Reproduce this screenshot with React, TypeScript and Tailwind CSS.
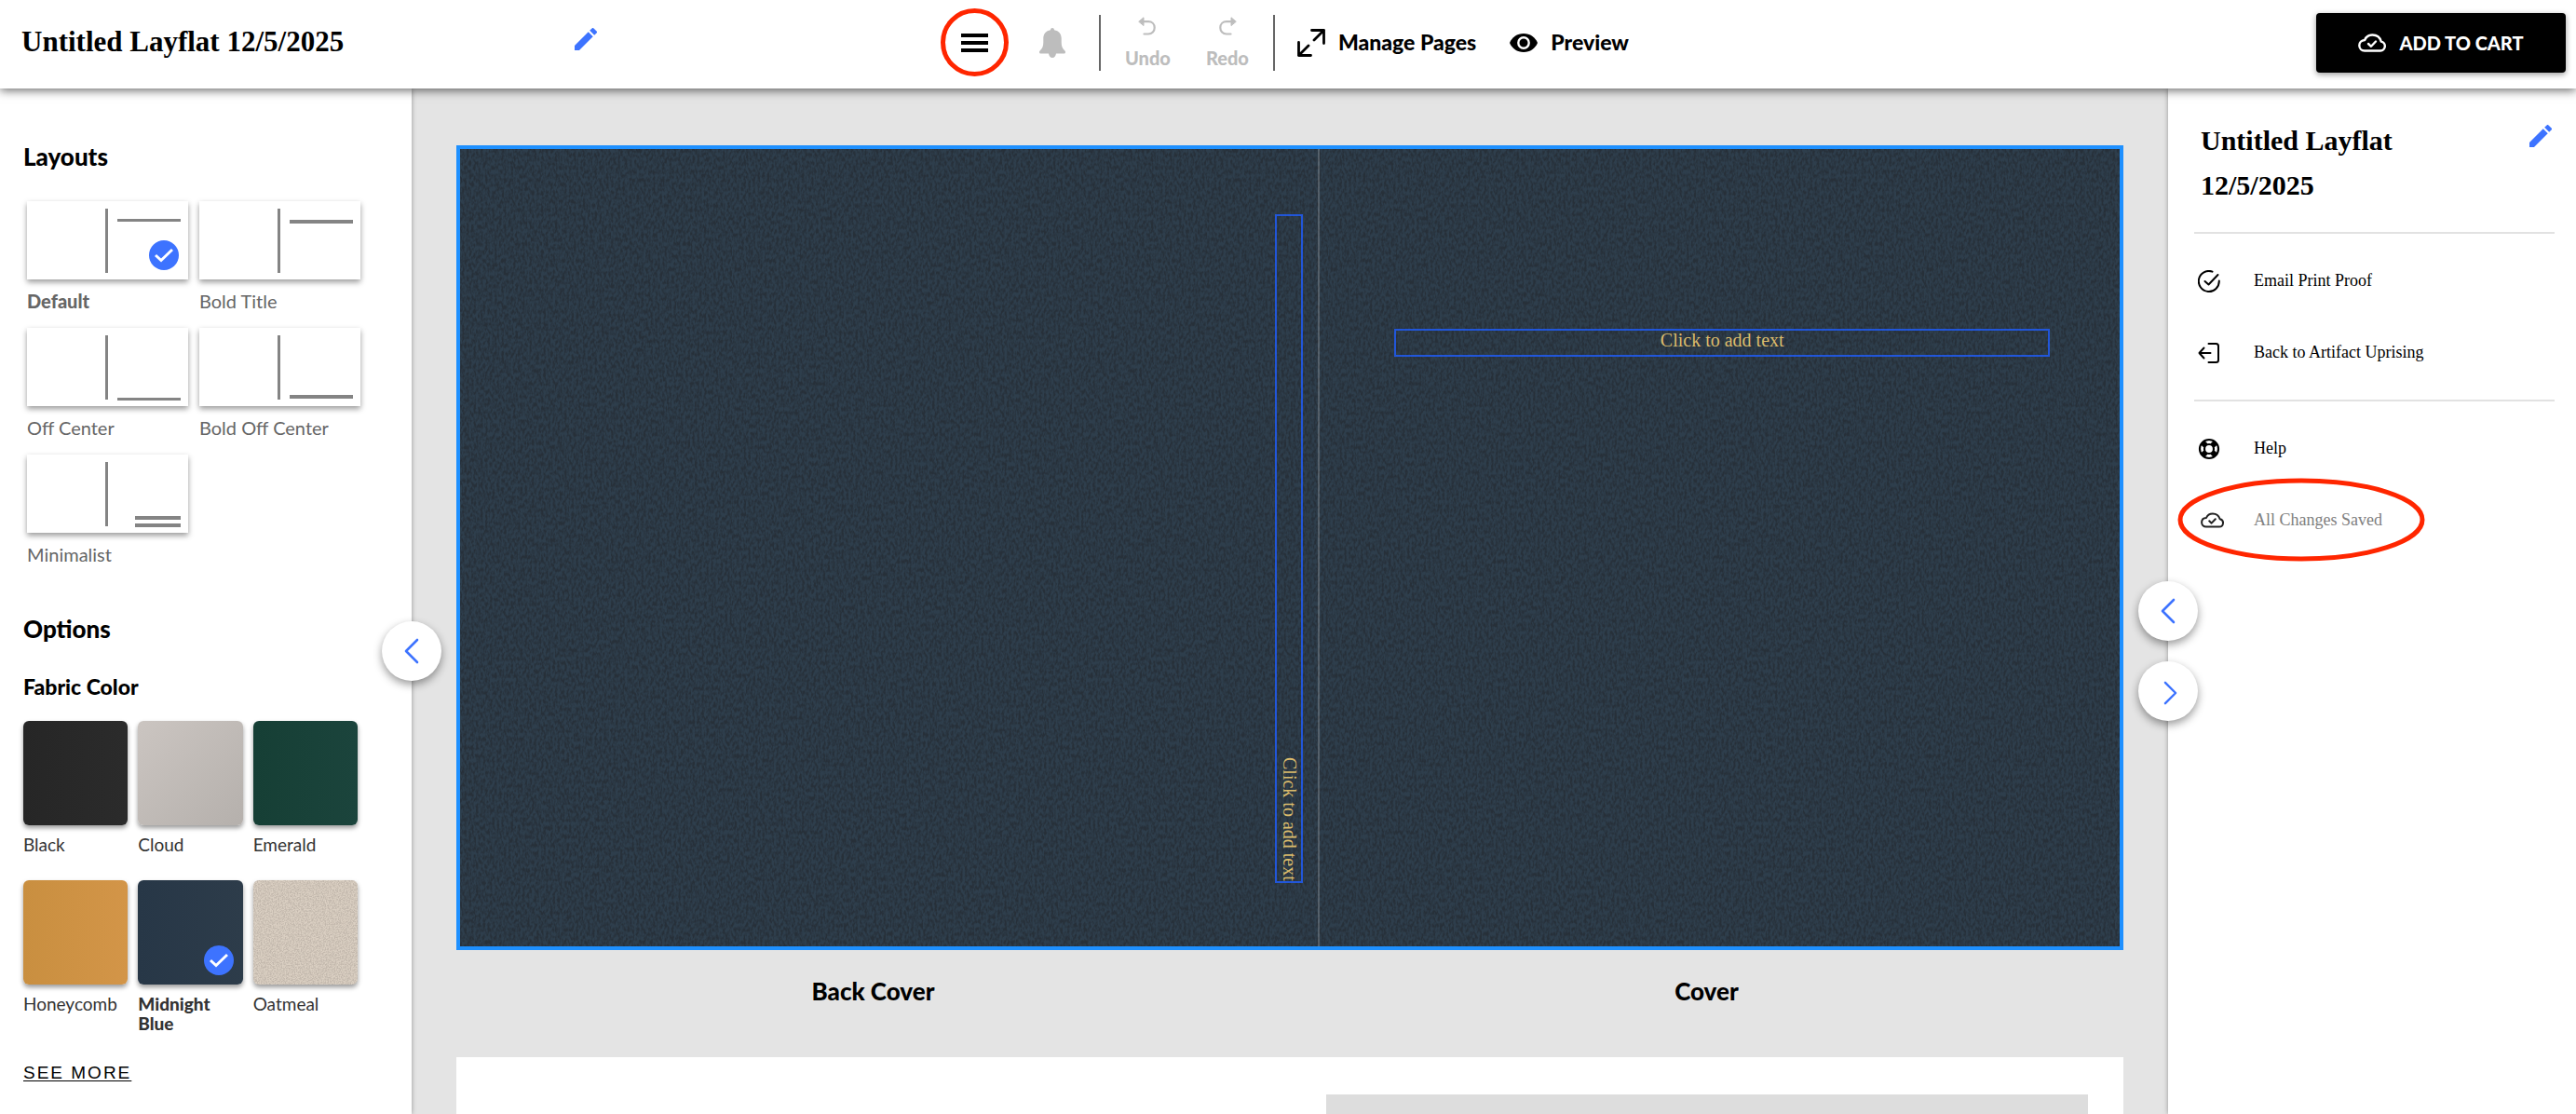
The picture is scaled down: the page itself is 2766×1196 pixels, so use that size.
import React, { useState } from 'react';

interface IconProps {
  className?: string;
}

interface Bar {
  x: number;
  y: number;
  w: number;
  h: number;
}

interface CoverLayout {
  name: string;
  bars: Bar[];
}

interface Fabric {
  name: string;
  swatch: string;
  woven?: boolean;
}

const layouts: CoverLayout[] = [
  { name: 'Default', bars: [{ x: 97, y: 19, w: 68, h: 3 }] },
  { name: 'Bold Title', bars: [{ x: 97, y: 20, w: 68, h: 4 }] },
  { name: 'Off Center', bars: [{ x: 97, y: 75, w: 68, h: 3 }] },
  { name: 'Bold Off Center', bars: [{ x: 97, y: 72, w: 68, h: 4 }] },
  {
    name: 'Minimalist',
    bars: [
      { x: 116, y: 66, w: 49, h: 4 },
      { x: 116, y: 74, w: 49, h: 4 },
    ],
  },
];

const fabrics: Fabric[] = [
  { name: 'Black', swatch: 'bg-linear-to-r from-[#262626] to-[#2b2b2b]' },
  { name: 'Cloud', swatch: 'bg-linear-to-br from-[#cbc5c1] to-[#b5b0ac]' },
  { name: 'Emerald', swatch: 'bg-linear-to-r from-[#163f35] to-[#1b443c]' },
  { name: 'Honeycomb', swatch: 'bg-linear-to-r from-[#c98f40] to-[#d39548]' },
  { name: 'Midnight Blue', swatch: 'bg-linear-to-r from-[#273747] to-[#2d3c4a]' },
  { name: 'Oatmeal', swatch: 'bg-[#dacfc2]', woven: true },
];

const PencilIcon: React.FC<IconProps> = ({ className }) => (
  <svg viewBox="3 3 18 18" className={className} fill="currentColor" aria-hidden="true">
    <path d="M3 17.25V21h3.75L17.81 9.94l-3.75-3.75L3 17.25zM20.71 7.04a1 1 0 0 0 0-1.41l-2.34-2.34a1 1 0 0 0-1.41 0l-1.83 1.83 3.75 3.75 1.83-1.83z" />
  </svg>
);

const BellIcon: React.FC<IconProps> = ({ className }) => (
  <svg viewBox="0 0 28 32" className={className} fill="currentColor" aria-hidden="true">
    <path d="M14 0c1.200 0 1.900.8 2 2.200C21 3 23.700 6.500 23.700 11v4.500c0 4 1 6.500 3.500 8.700 1.500 1.300.8 3.300-.8 3.300H18c-.4 2.600-1.800 4.500-4 4.500s-3.600-1.900-4-4.500H1.600c-1.600 0-2.300-2-.8-3.300 2.500-2.200 3.500-4.700 3.500-8.700V11C4.300 6.500 7 3 12 2.200 12.100.8 12.800 0 14 0z" />
  </svg>
);

const UndoIcon: React.FC<IconProps> = ({ className }) => (
  <svg viewBox="0 0 20 20" className={className} fill="none" stroke="currentColor" strokeWidth="2.200" strokeLinecap="round" aria-hidden="true">
    <path d="M5 5.200h6c4 0 6.700 2.700 6.700 6.500s-2.700 6.800-6.700 6.800H6.500" />
    <path d="M1 5 6 .8v8.400z" fill="currentColor" strokeWidth="1" strokeLinejoin="round" />
  </svg>
);

const ExpandIcon: React.FC<IconProps> = ({ className }) => (
  <svg viewBox="0 0 30 30" className={className} fill="none" stroke="currentColor" strokeWidth="2.800" strokeLinecap="round" strokeLinejoin="round" aria-hidden="true">
    <path d="M15.500 1.500h13v14M28.500 1.500 18 12M14.500 28.500h-13v-14M1.500 28.500 12 18" />
  </svg>
);

const EyeIcon: React.FC<IconProps> = ({ className }) => (
  <svg viewBox="0 0 30 20" className={className} aria-hidden="true">
    <path d="M15 0C8 0 2.500 4 0 10c2.500 6 8 10 15 10s12.500-4 15-10C27.500 4 22 0 15 0z" fill="currentColor" />
    <circle cx="15" cy="10" r="5.700" fill="currentColor" stroke="#fff" strokeWidth="2.400" />
  </svg>
);

const CloudCheckIcon: React.FC<IconProps> = ({ className }) => (
  <svg viewBox="0 0 30 20" className={className} fill="none" stroke="currentColor" strokeWidth="2.400" strokeLinecap="round" strokeLinejoin="round" aria-hidden="true">
    <path d="M7 18.500h17a5 5 0 0 0 .8-9.900C23.500 4 20 1.500 15.500 1.500c-3.800 0-7 2-8.300 5.500C3.500 7.200 1.300 9.800 1.300 12.800 1.300 16 3.800 18.500 7 18.500z" />
    <path d="m11 11 3 2.800 5-5.300" />
  </svg>
);

const ProofIcon: React.FC<IconProps> = ({ className }) => (
  <svg viewBox="0 0 24 24" className={className} fill="none" stroke="currentColor" strokeWidth="2" strokeLinecap="round" strokeLinejoin="round" aria-hidden="true">
    <path d="M22.800 11.500A11 11 0 1 1 15.500 1.600" />
    <path d="m7.500 12 4 3.500L21.500 5" />
  </svg>
);

const ExitIcon: React.FC<IconProps> = ({ className }) => (
  <svg viewBox="0 0 24 24" className={className} fill="none" stroke="currentColor" strokeWidth="2" strokeLinecap="round" strokeLinejoin="round" aria-hidden="true">
    <path d="M11.500 2h8A2.500 2.500 0 0 1 22 4.500v15a2.500 2.500 0 0 1-2.500 2.500h-8M13.500 12H1.500M6.500 6.500 1.500 12l5 5.500" />
  </svg>
);

const HelpIcon: React.FC<IconProps> = ({ className }) => (
  <svg viewBox="0 0 24 24" className={className} fill="none" stroke="currentColor" aria-hidden="true">
    <circle cx="12" cy="12" r="10" strokeWidth="2.200" />
    <circle cx="12" cy="12" r="5" strokeWidth="2.200" />
    <path d="m4.800 4.800 3.700 3.700M19.200 4.800l-3.700 3.700M4.800 19.200l3.700-3.700M19.200 19.200l-3.700-3.700" strokeWidth="6" />
  </svg>
);

const ChevronIcon: React.FC<IconProps> = ({ className }) => (
  <svg viewBox="0 0 16 28" className={className} fill="none" stroke="currentColor" strokeWidth="2.600" strokeLinecap="round" strokeLinejoin="round" aria-hidden="true">
    <path d="M14 2 2 14l12 12" />
  </svg>
);

const SelectedBadge: React.FC<IconProps> = ({ className }) => (
  <span className={`absolute flex size-8 items-center justify-center rounded-full bg-[#3d73ff] ${className}`}>
    <svg viewBox="0 0 20 14" className="h-4 w-5" fill="none" stroke="#fff" strokeWidth="3" aria-hidden="true">
      <path d="m1 7 6 5.500L19 1" />
    </svg>
  </span>
);

// woven cloth noise laid over a flat colour
const Weave: React.FC<{ id: string; frequency: string; opacity: number }> = ({ id, frequency, opacity }) => (
  <svg className="absolute inset-0 size-full" aria-hidden="true">
    <filter id={id} x="0" y="0" width="100%" height="100%" colorInterpolationFilters="sRGB">
      <feTurbulence type="fractalNoise" baseFrequency={frequency} numOctaves={2} seed={4} />
      <feColorMatrix values="0 0 0 0 0.1  0 0 0 0 0.08  0 0 0 0 0.08  3.200 0 0 0 -1.200" />
    </filter>
    <rect width="100%" height="100%" filter={`url(#${id})`} opacity={opacity} />
  </svg>
);

const roundButton =
  'absolute z-10 flex size-16 items-center justify-center rounded-full bg-white text-[#3d73ff] shadow-[0_4px_10px_rgba(0,0,0,0.4)]';

const App: React.FC = () => {
  const [layout, setLayout] = useState('Default');
  const [fabric, setFabric] = useState('Midnight Blue');

  return (
    <div className="flex h-screen flex-col overflow-hidden bg-[#e4e4e4] font-['Lato',sans-serif] text-black">
      <header className="relative z-20 flex h-[95px] shrink-0 items-center justify-between bg-white pr-[11px] pb-1 pl-[23px] shadow-[0_2px_10px_rgba(0,0,0,0.6)]">
        <div className="flex w-[618px] items-center justify-between">
          <h1 className="font-['Liberation_Serif',serif] text-[31px] font-bold">Untitled Layflat 12/5/2025</h1>
          <button aria-label="Edit title" className="mb-2 text-[#3d73ff]">
            <PencilIcon className="size-6" />
          </button>
        </div>

        <nav className="absolute left-[1010px] flex items-center">
          <button aria-label="Menu" className="flex size-[73px] flex-col items-center justify-center gap-1 rounded-full border-[5px] border-[#ff2600]">
            <span className="h-1 w-[29px] bg-black" />
            <span className="h-1 w-[29px] bg-black" />
            <span className="h-1 w-[29px] bg-black" />
          </button>
          <button aria-label="Notifications" className="ml-[33px] text-[#bdbdbd]">
            <BellIcon className="h-8 w-7" />
          </button>
          <div className="ml-9 flex h-[60px] items-center gap-[38px] border-x-2 border-[#666] px-[26px] text-[20px] leading-6 font-black text-[#bdbdbd]">
            <button className="flex flex-col items-center gap-3">
              <UndoIcon className="size-5" />
              Undo
            </button>
            <button className="flex flex-col items-center gap-3">
              <UndoIcon className="size-5 -scale-x-100" />
              Redo
            </button>
          </div>
          <button className="ml-6 flex items-center gap-[14px] text-[23px] font-black">
            <ExpandIcon className="size-[30px]" />
            Manage Pages
          </button>
          <button className="ml-9 flex items-center gap-[14px] text-[23px] font-black">
            <EyeIcon className="h-5 w-[30px]" />
            Preview
          </button>
        </nav>

        <button className="flex h-16 w-[268px] items-center justify-center gap-[14px] rounded-sm bg-black text-[20px] font-black text-white shadow-[0_2px_6px_rgba(0,0,0,0.4)]">
          <CloudCheckIcon className="h-5 w-[30px]" />
          ADD TO CART
        </button>
      </header>

      <div className="flex min-h-0 flex-1">
        <aside className="relative w-[442px] shrink-0 bg-white px-[25px] pt-[57px] shadow-[0_0_5px_rgba(0,0,0,0.35)]">
          <h2 className="text-[26px] leading-8 font-black">Layouts</h2>
          <div className="mt-8 ml-1 grid w-[358px] grid-cols-2 gap-x-3 gap-y-[17px]">
            {layouts.map(item => (
              <button
                key={item.name}
                onClick={() => setLayout(item.name)}
                className={`text-left text-[20px] leading-6 text-[#666] ${layout === item.name ? 'font-black' : ''}`}
              >
                <span className="relative block h-[84px] shadow-[0_3px_6px_rgba(0,0,0,0.4)]">
                  <svg viewBox="0 0 173 84" className="size-full" fill="#848484" aria-hidden="true">
                    <rect x="84" y="8" width="3" height="69" />
                    {item.bars.map(bar => (
                      <rect key={bar.y} x={bar.x} y={bar.y} width={bar.w} height={bar.h} />
                    ))}
                  </svg>
                  {layout === item.name && <SelectedBadge className="right-[10px] bottom-[10px]" />}
                </span>
                <span className="mt-[11px] block">{item.name}</span>
              </button>
            ))}
          </div>

          <h2 className="mt-[52px] text-[26px] leading-8 font-black">Options</h2>
          <h3 className="mt-[30px] text-[23px] leading-8 font-black">Fabric Color</h3>
          <div className="mt-[21px] grid w-[359px] grid-cols-3 gap-x-[11px] gap-y-[28px]">
            {fabrics.map(item => (
              <button
                key={item.name}
                onClick={() => setFabric(item.name)}
                className={`flex flex-col text-left text-[19px] leading-[21px] text-[#333] ${fabric === item.name ? 'font-black' : ''}`}
              >
                <span className={`relative block h-28 w-full overflow-hidden rounded-md shadow-[0_3px_5px_rgba(0,0,0,0.4)] ${item.swatch}`}>
                  {item.woven && <Weave id="oatmeal" frequency="0.7 0.7" opacity={0.12} />}
                  {fabric === item.name && <SelectedBadge className="right-[10px] bottom-[10px]" />}
                </span>
                <span className="mt-[10px]">{item.name}</span>
              </button>
            ))}
          </div>
          <a href="#more" className="mt-[31px] inline-block font-['Liberation_Sans',sans-serif] text-[19px] leading-6 tracking-[2px] underline underline-offset-2">
            SEE MORE
          </a>
          <button aria-label="Collapse options" className={`${roundButton} top-[572px] -right-8`}>
            <ChevronIcon className="h-7 w-4" />
          </button>
        </aside>

        <main className="flex min-w-0 flex-1 flex-col px-12 pt-[61px]">
          <div className="relative h-[864px] shrink-0 border-4 border-[#1e90ff] bg-[#2e3e4c]">
            <Weave id="cover" frequency="0.4 0.22" opacity={0.32} />
            <div className="absolute inset-y-0 left-[51.700%] w-[2px] bg-white/20" />
            <button className="absolute top-[70px] bottom-[68px] left-[49.100%] flex w-[30px] items-start justify-end border-2 border-[#1f5eff]/80 font-['Liberation_Serif',serif] text-[20px] leading-6 text-[#dcbc6c] [writing-mode:vertical-rl]">
              Click to add text
            </button>
            <button className="absolute top-[193px] right-[4.200%] flex h-[30px] w-[39.500%] items-start justify-center border-2 border-[#1f5eff]/80 font-['Liberation_Serif',serif] text-[20px] leading-5 text-[#dcbc6c]">
              Click to add text
            </button>
          </div>
          <div className="mt-[26px] flex text-center text-[26px] leading-9 font-black">
            <div className="flex-1">Back Cover</div>
            <div className="flex-1">Cover</div>
          </div>
          <div className="mt-[53px] flex flex-1 justify-end bg-white pt-10 pr-[38px]">
            <div className="w-[818px] bg-[#ddd]" />
          </div>
        </main>

        <aside className="relative w-[438px] shrink-0 bg-white pr-[23px] pl-7 font-['Liberation_Serif',serif] shadow-[0_0_5px_rgba(0,0,0,0.35)]">
          <div className="flex items-start justify-between px-[7px] pt-8 pb-[26px]">
            <h2 className="w-[220px] text-[30px] leading-12 font-bold">Untitled Layflat 12/5/2025</h2>
            <button aria-label="Edit project name" className="mt-[7px] -mr-1 text-[#3d73ff]">
              <PencilIcon className="size-6" />
            </button>
          </div>
          <ul className="border-y-2 border-[#e2e2e2] py-3 text-[18px]">
            <li>
              <a href="#proof" className="flex h-[77px] items-center gap-9 px-1">
                <ProofIcon className="size-6" />
                Email Print Proof
              </a>
            </li>
            <li>
              <a href="#back" className="flex h-[77px] items-center gap-9 px-1">
                <ExitIcon className="size-6" />
                Back to Artifact Uprising
              </a>
            </li>
          </ul>
          <ul className="py-3 text-[18px]">
            <li>
              <a href="#help" className="flex h-[77px] items-center gap-9 px-1">
                <HelpIcon className="size-6" />
                Help
              </a>
            </li>
            <li className="relative flex h-[77px] items-center gap-8 px-1 text-[#808080]">
              <CloudCheckIcon className="ml-[3px] h-[17px] w-[25px] text-[#222]" />
              All Changes Saved
              <svg viewBox="0 0 266 90" className="absolute -top-[7px] -left-[18px] h-[90px] w-[266px]" fill="none" stroke="#ff2600" strokeWidth="5" aria-hidden="true">
                <ellipse cx="133" cy="45" rx="130" ry="42" />
              </svg>
            </li>
          </ul>
          <button aria-label="Previous spread" className={`${roundButton} top-[529px] -left-8`}>
            <ChevronIcon className="h-7 w-4" />
          </button>
          <button aria-label="Next spread" className={`${roundButton} top-[615px] -left-8 pt-1 pl-1`}>
            <ChevronIcon className="h-[26px] w-[15px] rotate-180" />
          </button>
        </aside>
      </div>
    </div>
  );
};

export default App;
